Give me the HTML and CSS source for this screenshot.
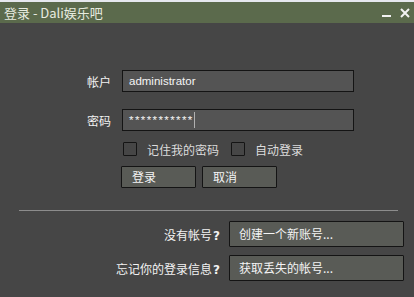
FILE: index.html
```html
<!DOCTYPE html>
<html>
<head>
    <title>登录 - Dali娱乐吧</title>
    <link rel="stylesheet" href="styles.css">
</head>
<body>
    <div class="window">
        <div class="topStrip"></div>
        <div class="titleBar">
            <span class="title">登录 - Dali娱乐吧</span>
            <div class="titleButtons">
                <svg width="9" height="10" viewBox="0 0 9 10"><rect x="0" y="7" width="9" height="2" fill="#f2f2f2"/></svg>
                <svg width="10" height="10" viewBox="0 0 10 10"><path d="M1 1 L9 9 M9 1 L1 9" stroke="#f2f2f2" stroke-width="2"/></svg>
            </div>
        </div>

        <div class="content">
            <div class="form">
                <div class="row">
                    <label class="label">帐户</label>
                    <div class="input">administrator</div>
                </div>
                <div class="row">
                    <label class="label">密码</label>
                    <div class="input"><span class="secret">***********</span><span class="caret"></span></div>
                </div>
                <div class="checks">
                    <span class="box"></span><span class="checkText">记住我的密码</span>
                    <span class="box second"></span><span class="checkText">自动登录</span>
                </div>
                <div class="buttons">
                    <div class="btn">登录</div>
                    <div class="btn">取消</div>
                </div>
            </div>

            <div class="separator"></div>

            <div class="links">
                <div class="linkRow">
                    <span class="linkLabel">没有帐号<b>?</b></span>
                    <div class="wideBtn">创建一个新账号...</div>
                </div>
                <div class="linkRow">
                    <span class="linkLabel">忘记你的登录信息<b>?</b></span>
                    <div class="wideBtn">获取丢失的帐号...</div>
                </div>
            </div>
        </div>
    </div>
</body>
</html>
```

FILE: styles.css
```css
*{
    padding: 0;
    margin: 0;
    box-sizing: border-box;
    font-family: 'Noto Sans CJK SC', 'Noto Sans', sans-serif;
}

body{
    background-color: #464646;
}

.window{
    width: 414px;
    height: 297px;
    background-color: #464646;
    overflow: hidden;
}

.topStrip{
    height: 2px;
    background-color: #e6e8ee;
}

.titleBar{
    height: 21px;
    background-color: #5b6a4c;
    display: flex;
    align-items: center;
    justify-content: space-between;
    padding: 0 4px 0 4px;

    .title{
        color: #e8ece0;
        font-size: 13px;
        line-height: 21px;
    }

    .titleButtons{
        display: flex;
        gap: 9px;
        align-items: center;
        padding-top: 1px;
    }
}

.content{
    padding-top: 47px;
}

.form{
    padding-left: 87px;

    .row{
        display: flex;
        align-items: center;
        height: 22px;
        margin-bottom: 17px;
    }

    .label{
        width: 35px;
        color: #f2f2f2;
        font-size: 12px;
    }

    .input{
        width: 232px;
        height: 22px;
        background-color: #545454;
        border: 1px solid #141414;
        color: #f4f4f4;
        font-family: 'Liberation Sans', sans-serif;
        font-size: 11.5px;
        line-height: 20px;
        padding-left: 6px;
        display: flex;
        align-items: center;
    }

    .secret{
        font-family: 'Liberation Sans', sans-serif;
        letter-spacing: 1.4px;
    }

    .caret{
        display: inline-block;
        width: 1px;
        height: 16px;
        background-color: #b0b0b0;
        margin-left: 0;
    }

    .checks{
        display: flex;
        align-items: center;
        height: 14px;
        margin-top: -6px;
        padding-left: 36px;

        .box{
            width: 14px;
            height: 14px;
            border: 1px solid #141414;
            background-color: #464646;
            border-radius: 1px;
        }

        .second{
            margin-left: 12px;
        }

        .checkText{
            color: #dcdcdc;
            font-size: 12px;
            margin-left: 10px;
        }
    }

    .buttons{
        display: flex;
        gap: 6px;
        margin-top: 10px;
        padding-left: 34px;

        .btn{
            width: 75px;
            height: 22px;
            background-color: #595b56;
            border: 1px solid #141414;
            border-radius: 1px;
            color: #f4f4f4;
            font-size: 12px;
            line-height: 20px;
            padding-left: 10px;
        }
    }
}

.separator{
    margin: 22px 16px 0 19px;
    height: 1px;
    background-color: #8c8c8c;
}

.links{
    padding-top: 10px;
    display: flex;
    flex-direction: column;
    gap: 8px;

    .linkRow{
        display: flex;
        align-items: center;
    }

    .linkLabel{
        width: 220px;
        text-align: right;
        color: #f2f2f2;
        font-size: 12px;
    }

    .linkLabel b{
        font-family: 'DejaVu Sans', sans-serif;
        font-size: 12px;
        margin-left: 1px;
    }

    .wideBtn{
        margin-left: 9px;
        width: 175px;
        height: 26px;
        background-color: #595b56;
        border: 1px solid #141414;
        border-radius: 1px;
        color: #f4f4f4;
        font-size: 12px;
        line-height: 24px;
        padding-left: 9px;
    }
}
```
